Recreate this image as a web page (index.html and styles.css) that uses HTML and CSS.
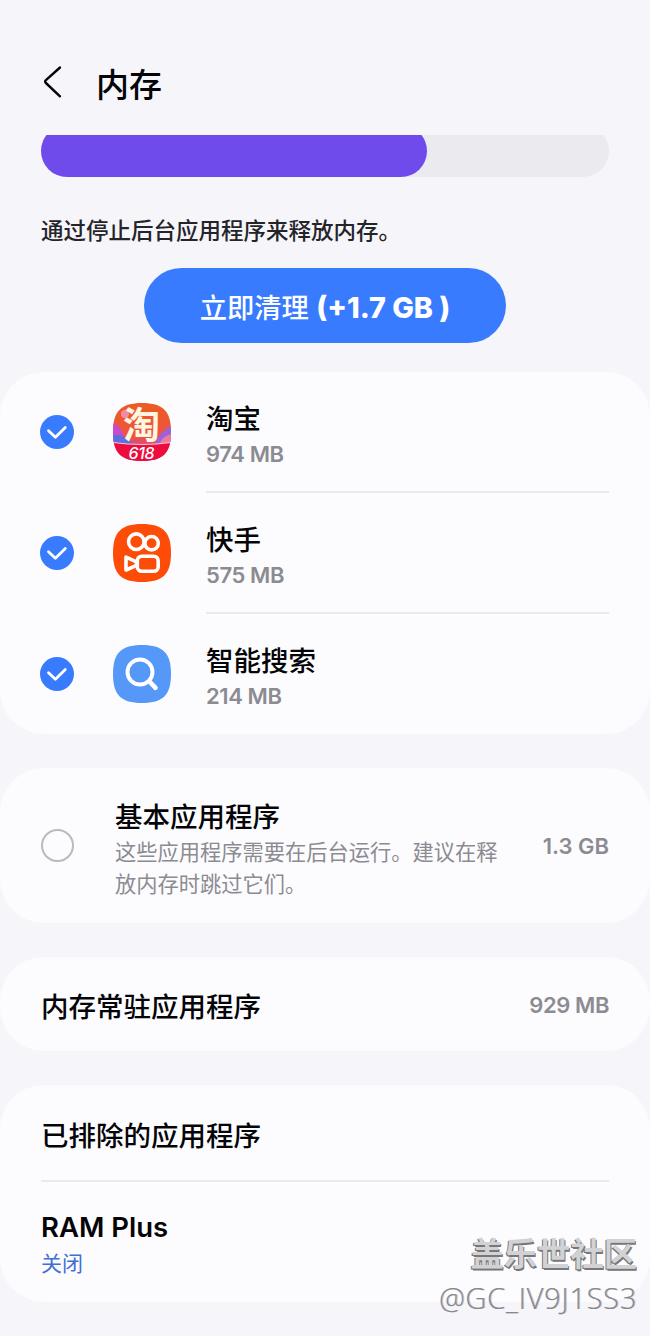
FILE: index.html
```
<!DOCTYPE html>
<html lang="zh-CN">

<head>
    <meta charset="UTF-8">
    <meta name="viewport" content="width=device-width,initial-scale=1">
    <link rel="stylesheet" href="styles.css">
    <title>内存</title>
</head>

<body>
    <header class="header">
        <svg class="back" viewBox="0 0 20 34">
            <path d="M18 2.500L3.900 15.200Q2.400 16.600 3.900 18L18 31.300" />
        </svg>
        <h1>内存</h1>
    </header>

    <div class="usage">
        <div class="usage-track">
            <div class="usage-value" style="width: 68%"></div>
        </div>
    </div>
    <p class="tip">通过停止后台应用程序来释放内存。</p>
    <button class="clean">立即清理 <b>(+1.7 GB )</b></button>

    <main>
        <section class="card">
            <div class="app">
                <svg class="check" viewBox="0 0 34 34">
                    <circle cx="17" cy="17" r="17" />
                    <path d="M8.500 15.800L15.400 22.300L25.300 12.600" />
                </svg>
                <svg class="icon" viewBox="0 0 58 58">
                    <defs>
                        <clipPath id="squircle">
                            <path d="M29 0C50 0 58 8 58 29S50 58 29 58S0 50 0 29S8 0 29 0Z" />
                        </clipPath>
                        <linearGradient id="sunset" x1="0" y1="0" x2="0" y2="1">
                            <stop offset="0" stop-color="#ec5b22" />
                            <stop offset=".55" stop-color="#ee5440" />
                            <stop offset="1" stop-color="#b83fc0" />
                        </linearGradient>
                    </defs>
                    <g clip-path="url(#squircle)">
                        <rect width="58" height="58" fill="url(#sunset)" />
                        <circle cx="12" cy="11" r="4" fill="#f58aa8" />
                        <path d="M0 20Q9 23 13 40H0Z" fill="#c74bd0" />
                        <path d="M0 32Q12 31 20 41H0Z" fill="#5c6fe0" />
                        <path d="M58 23Q46 29 42 41H58Z" fill="#9b63d8" />
                        <path d="M58 31Q50 33 46 41H58Z" fill="#ef7a9c" />
                        <path d="M0 39.500Q29 43.500 58 39.500V58H0Z" fill="#ee0c3c" />
                        <path d="M0 39.500Q29 43.500 58 39.500" fill="none" stroke="#f6c6e4" stroke-width="1.200" />
                    </g>
                    <text class="tao" x="28.500" y="36">淘</text>
                    <text class="festival" x="28.500" y="55.500" textLength="26">618</text>
                </svg>
                <div class="app-text">
                    <h2>淘宝</h2>
                    <p class="size">974 MB</p>
                </div>
            </div>
            <div class="app">
                <svg class="check" viewBox="0 0 34 34">
                    <circle cx="17" cy="17" r="17" />
                    <path d="M8.500 15.800L15.400 22.300L25.300 12.600" />
                </svg>
                <svg class="icon" viewBox="0 0 58 58">
                    <path d="M29 0C50 0 58 8 58 29S50 58 29 58S0 50 0 29S8 0 29 0Z" fill="#fd4b08" />
                    <g fill="none" stroke="#fff" stroke-width="3.600" stroke-linejoin="round">
                        <circle cx="23.300" cy="17.700" r="7.800" />
                        <circle cx="38.600" cy="19.200" r="6.700" />
                        <rect x="24.300" y="32.200" width="20.900" height="15" rx="4.500" />
                        <path d="M13 33.200V46L23.500 41.300V37.900Z" />
                    </g>
                </svg>
                <div class="app-text">
                    <h2>快手</h2>
                    <p class="size">575 MB</p>
                </div>
            </div>
            <div class="app">
                <svg class="check" viewBox="0 0 34 34">
                    <circle cx="17" cy="17" r="17" />
                    <path d="M8.500 15.800L15.400 22.300L25.300 12.600" />
                </svg>
                <svg class="icon" viewBox="0 0 58 58">
                    <path d="M29 0C50 0 58 8 58 29S50 58 29 58S0 50 0 29S8 0 29 0Z" fill="#5698f8" />
                    <g fill="none" stroke="#fff" stroke-linecap="round">
                        <circle cx="27" cy="27" r="12.500" stroke-width="3.900" />
                        <path d="M36.500 36.500L42.500 42.800" stroke-width="4.600" />
                    </g>
                </svg>
                <div class="app-text">
                    <h2>智能搜索</h2>
                    <p class="size">214 MB</p>
                </div>
            </div>
        </section>

        <section class="card basic">
            <span class="unchecked"></span>
            <div class="basic-text">
                <h2>基本应用程序</h2>
                <p>这些应用程序需要在后台运行。建议在释放内存时跳过它们。</p>
            </div>
            <span class="size">1.3 GB</span>
        </section>

        <section class="card resident">
            <h2>内存常驻应用程序</h2>
            <span class="size">929 MB</span>
        </section>

        <section class="card more">
            <h2 class="excluded">已排除的应用程序</h2>
            <div class="ram">
                <h2>RAM Plus</h2>
                <p>关闭</p>
            </div>
        </section>
    </main>

    <div class="watermark">
        <div class="community">盖乐世社区</div>
        <div class="user">@GC_IV9J1SS3</div>
    </div>
</body>

</html>
```
FILE: styles.css
```
*,
*::before,
*::after {
    box-sizing: border-box;
    padding: 0;
    margin: 0;
}

body {
    position: relative;
    height: 1336px;
    overflow: hidden;
    background: #f5f5fa;
    color: #050507;
    font-family: Inter, "Noto Sans CJK SC", sans-serif;
}

h1,
h2 {
    font-weight: 500;
}

.header {
    display: flex;
    align-items: center;
    height: 135px;
    padding: 28px 42px 0;
}

.header h1 {
    margin-left: 34px;
    padding-top: 6px;
    font-size: 33px;
    line-height: 44px;
}

.back {
    width: 20px;
    height: 34px;
    fill: none;
    stroke: #050507;
    stroke-width: 2.4;
    stroke-linecap: round;
}

/* the bar is half scrolled under the header */
.usage {
    display: flex;
    align-items: flex-end;
    height: 42px;
    margin: 0 41px;
    overflow: hidden;
}

.usage-track {
    flex: none;
    width: 100%;
    height: 52px;
    border-radius: 26px;
    background: #ebebef;
}

.usage-value {
    height: 100%;
    border-radius: 26px;
    background: #6f4beb;
}

.tip {
    margin: 37px 41px 0;
    color: #242429;
    font-size: 22.5px;
    font-weight: 500;
    line-height: 34px;
}

.clean {
    display: block;
    width: 362px;
    height: 75px;
    margin: 20px auto 29px;
    padding-top: 5px;
    border: none;
    border-radius: 38px;
    background: #387bff;
    color: #fff;
    font-family: inherit;
    font-size: 27.3px;
    font-weight: 500;
    line-height: 38px;
    white-space: nowrap;
}

.clean b {
    font-size: 28.8px;
    font-weight: 800;
}

main {
    display: grid;
    gap: 34px;
}

.card {
    border-radius: 44px;
    background: #fcfcff;
}

.card h2 {
    font-size: 27.5px;
    line-height: 38px;
}

.size {
    color: #8b8b91;
    font-size: 22px;
    font-weight: 600;
    letter-spacing: -0.4px;
    line-height: 32px;
    white-space: nowrap;
}

.app {
    display: flex;
    align-items: center;
    height: 121px;
    padding: 0 41px 0 40px;
}

.app:last-child {
    height: 120px;
}

.check {
    width: 34px;
    height: 34px;
    margin-bottom: 1px;
    fill: #387bff;
}

.check path {
    fill: none;
    stroke: #fff;
    stroke-width: 2.8;
    stroke-linecap: round;
    stroke-linejoin: round;
}

.icon {
    width: 58px;
    height: 58px;
    margin: 0 35px 1px 39px;
}

.icon text {
    fill: #fff;
    text-anchor: middle;
}

.icon .tao {
    fill: #fff6e2;
    font-size: 37px;
    font-weight: 700;
}

.festival {
    font-size: 16px;
    font-style: italic;
    font-weight: 500;
}

.app-text {
    flex: 1;
    height: 100%;
    padding-top: 28px;
    border-bottom: 2px solid #e9e9ef;
}

.app:last-child .app-text {
    border: none;
}

.basic {
    display: flex;
    align-items: center;
    height: 155px;
    padding: 0 41px;
}

.unchecked {
    flex: none;
    width: 33px;
    height: 33px;
    border: 2px solid #b9b9be;
    border-radius: 50%;
}

.basic-text {
    width: 383px;
    margin: 6px 0 0 41px;
}

.basic-text p {
    color: #8b8b91;
    font-size: 21.25px;
    line-height: 32px;
}

.basic .size {
    margin-left: auto;
    letter-spacing: 0;
}

.resident {
    display: flex;
    align-items: center;
    justify-content: space-between;
    height: 94px;
    padding: 2px 41px 0;
}

.resident h2 {
    padding-top: 4px;
}

.more {
    height: 217px;
    padding: 0 41px;
}

.more .excluded {
    height: 97px;
    padding-top: 32px;
    border-bottom: 2px solid #e9e9ef;
}

.ram {
    padding-top: 26px;
}

.ram h2 {
    font-weight: 600;
}

.ram p {
    color: #3f6fd3;
    font-size: 21px;
    line-height: 36px;
}

.watermark {
    position: absolute;
    right: 13px;
    bottom: 16px;
    color: #d2d2d4;
    text-align: right;
    text-shadow: -1px 1px 0 #77777a, 1px 2px 0 #77777a;
}

.community {
    font-size: 33.3px;
    font-weight: 700;
    line-height: 44px;
}

.user {
    color: #88888c;
    font-family: "Open Sans", "Noto Sans", sans-serif;
    font-size: 29px;
    font-weight: 300;
    letter-spacing: 0.75px;
    line-height: 44px;
    text-shadow: 1px 0 0 #c4c4c8;
}
```
